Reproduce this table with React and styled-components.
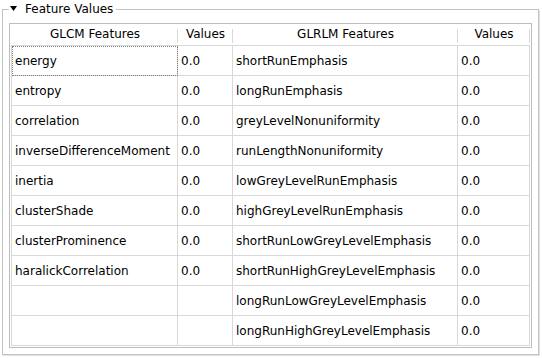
import React from "react";
import styled, { createGlobalStyle } from "styled-components";

const GlobalStyle = createGlobalStyle`
  html, body {
    margin: 0;
    padding: 0;
    background: #ffffff;
  }
  body {
    font-family: "DejaVu Sans", "Liberation Sans", sans-serif;
    font-size: 12px;
    color: #000000;
  }
  * { box-sizing: border-box; }
`;

const GRID = "#d8d8d8";
const COLS = "166px 55px 225px 72px";

const GroupBox = styled.fieldset`
  margin: 0 3px 3px 2px;
  padding: 0;
  min-width: 0;
  border: 1px solid #c2c2c2;
  box-shadow: 1px 1px 0 #e2e2e2;
`;

const Legend = styled.legend`
  margin-left: 6px;
  padding: 0 3px 0 1px;
  height: 18px;
  line-height: 18px;
  display: flex;
  align-items: center;
  gap: 8px;
  font-size: 12px;
  color: #000;
`;

const Arrow = styled.svg`
  display: block;
  width: 7px;
  height: 5px;
  margin-top: -2px;
`;

const TableFrame = styled.div`
  margin: 5px 0 6px 6px;
  width: 523px;
  border: 1px solid #bdbdbd;
  padding: 0 1px 1px 1px;
  background: #fff;
`;

const HeaderBar = styled.div`
  border-bottom: 1px solid ${GRID};
`;

const Grid = styled.div`
  display: grid;
  grid-template-columns: ${COLS};
  border-left: 1px solid ${(p) => (p.$header ? "transparent" : GRID)};
  margin-right: 1px;
`;

const HeaderCell = styled.div`
  height: 21px;
  line-height: 21px;
  text-align: center;
  white-space: nowrap;
  overflow: hidden;
  background: linear-gradient(${GRID}, ${GRID}) right 5px / 1px 14px no-repeat;
`;

const Cell = styled.div`
  height: 30px;
  display: flex;
  align-items: center;
  padding-left: 3px;
  white-space: nowrap;
  overflow: hidden;
  border-right: 1px solid ${GRID};
  border-bottom: 1px solid ${GRID};
  outline: ${(p) => (p.$focused ? "1px dotted #808080" : "none")};
  outline-offset: -1px;
`;

const glcm = [
  "energy",
  "entropy",
  "correlation",
  "inverseDifferenceMoment",
  "inertia",
  "clusterShade",
  "clusterProminence",
  "haralickCorrelation",
  "",
  "",
];

const glrlm = [
  "shortRunEmphasis",
  "longRunEmphasis",
  "greyLevelNonuniformity",
  "runLengthNonuniformity",
  "lowGreyLevelRunEmphasis",
  "highGreyLevelRunEmphasis",
  "shortRunLowGreyLevelEmphasis",
  "shortRunHighGreyLevelEmphasis",
  "longRunLowGreyLevelEmphasis",
  "longRunHighGreyLevelEmphasis",
];

const headers = ["GLCM Features", "Values", "GLRLM Features", "Values"];

export default function App() {
  return (
    <>
      <GlobalStyle />
      <GroupBox>
        <Legend>
          <Arrow viewBox="0 0 7 5">
            <path d="M0 0 H7 L3.5 5 Z" fill="#000" />
          </Arrow>
          <span>Feature Values</span>
        </Legend>
        <TableFrame>
          <HeaderBar>
            <Grid $header>
              {headers.map((h, i) => (
                <HeaderCell key={i}>{h}</HeaderCell>
              ))}
            </Grid>
          </HeaderBar>
          <Grid>
            {glcm.map((name, i) => (
              <React.Fragment key={i}>
                <Cell $focused={i === 0}>{name}</Cell>
                <Cell>{name ? "0.0" : ""}</Cell>
                <Cell>{glrlm[i]}</Cell>
                <Cell>0.0</Cell>
              </React.Fragment>
            ))}
          </Grid>
        </TableFrame>
      </GroupBox>
    </>
  );
}
